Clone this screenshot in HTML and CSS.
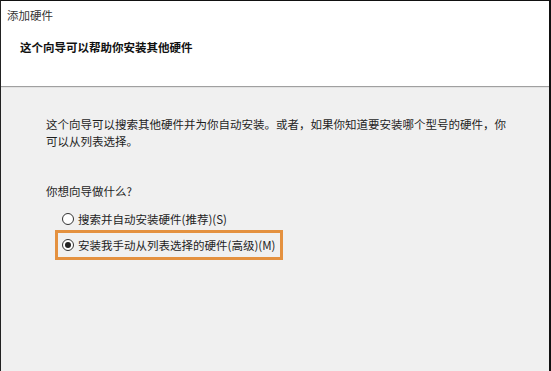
FILE: index.html
```html
<!DOCTYPE html>
<html lang="zh-CN">
<head>
  <meta charset="UTF-8">
  <title>添加硬件</title>
  <link rel="stylesheet" href="styles.css">
</head>
<body>
  <div class="wizard">
    <div class="header">
      <div class="title">添加硬件</div>
      <h2 class="heading">这个向导可以帮助你安装其他硬件</h2>
    </div>

    <div class="content">
      <p class="intro">这个向导可以搜索其他硬件并为你自动安装。或者，如果你知道要安装哪个型号的硬件，你可以从列表选择。</p>

      <p class="question">你想向导做什么?</p>

      <!-- options -->
      <div class="options">
        <label class="option">
          <span class="radio"></span>
          <span>搜索并自动安装硬件(推荐)(S)</span>
        </label>
        <label class="option selected">
          <span class="radio checked"></span>
          <span>安装我手动从列表选择的硬件(高级)(M)</span>
        </label>
      </div>
    </div>
  </div>
</body>
</html>
```

FILE: styles.css
```css
body {
  margin: 0;
  font-family: "Noto Sans CJK SC", "Liberation Sans", sans-serif;
  font-size: 11.5px;
  color: #1e1e1e;
  background: #f0f0f0;
}
.wizard {
  width: 551px;
  height: 371px;
  box-sizing: border-box;
  border-top: 1px solid #111;
  border-left: 1px solid #222;
  border-right: 2px solid #111;
  background: #f0f0f0;
  display: flex;
  flex-direction: column;
}
.header {
  height: 86px;
  background: #fff;
  border-bottom: 1px solid #a0a0a0;
  box-shadow: 0 1px 0 #e2e2e2;
  padding-top: 6px;
  box-sizing: border-box;
}
.title {
  padding-left: 6px;
  line-height: 16px;
  color: #333;
}
.heading {
  margin: 16px 0 0 19px;
  font-size: 11.5px;
  font-weight: bold;
  line-height: 16px;
  color: #111;
}
.content {
  padding: 29px 0 0 45px;
}
.intro {
  margin: 0;
  width: 462px;
  line-height: 17px;
}
.question {
  margin: 33px 0 0 0;
  line-height: 17px;
}
.options {
  margin-top: 7px;
  margin-left: 9px;
  width: 228px;
}
.option {
  display: flex;
  align-items: center;
  gap: 4px;
  height: 23px;
  padding-left: 7px;
  box-sizing: border-box;
}
.option.selected {
  height: 30px;
  border: 3px solid #e4913f;
  padding-left: 4px;
}
.radio {
  width: 12px;
  height: 12px;
  border: 1px solid #333;
  border-radius: 50%;
  background: #fff;
  box-sizing: border-box;
  display: flex;
  align-items: center;
  justify-content: center;
}
.radio.checked::after {
  content: "";
  width: 6px;
  height: 6px;
  border-radius: 50%;
  background: #222;
}
```
